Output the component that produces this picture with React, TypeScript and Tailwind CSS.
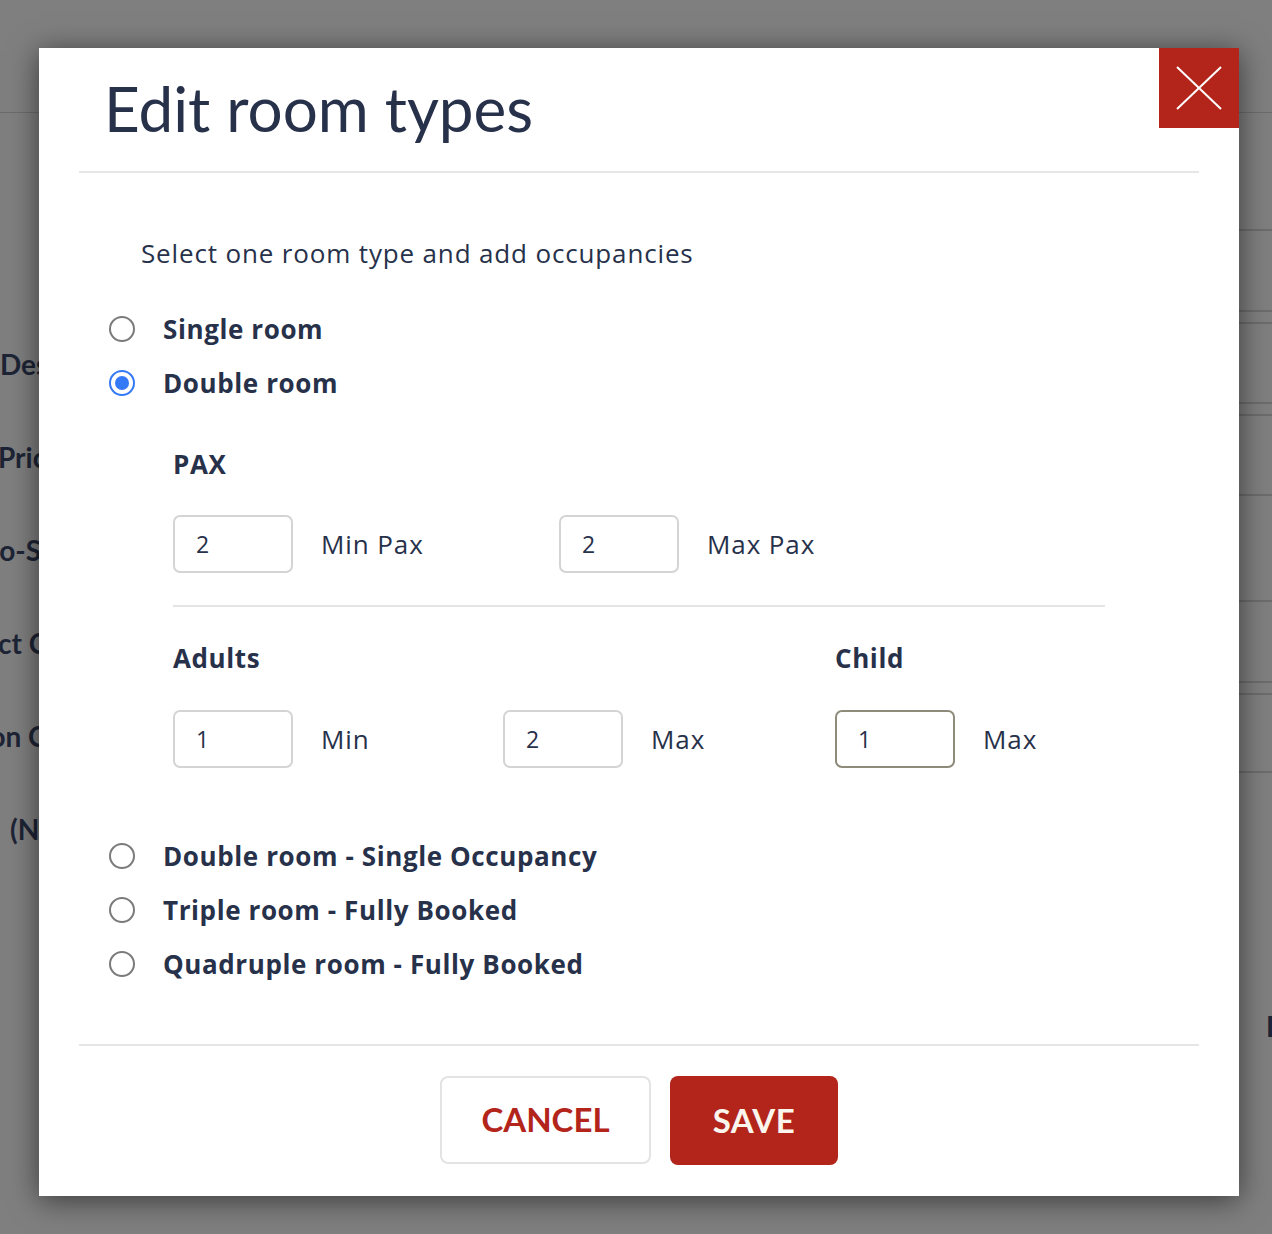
import React from 'react';

const ink = 'text-[#27314a]';
const body = "font-['Open_Sans','Noto_Sans',sans-serif]";

const Radio = ({ checked }: { checked?: boolean }) =>
  checked ? (
    <span className="flex h-[26px] w-[26px] shrink-0 items-center justify-center rounded-full border-[2.5px] border-[#3479f6] bg-white">
      <span className="h-[14px] w-[14px] rounded-full bg-[#3479f6]" />
    </span>
  ) : (
    <span className="h-[26px] w-[26px] shrink-0 rounded-full border-2 border-[#7b7b7b] bg-white" />
  );

const RoomOption = ({ label, checked }: { label: string; checked?: boolean }) => (
  <label className="flex h-[54px] items-center">
    <span className="ml-[70px] flex w-[54px] items-center">
      <Radio checked={checked} />
    </span>
    <span className={`text-[26px] font-bold tracking-[0.6px] ${ink}`}>{label}</span>
  </label>
);

const NumberField = ({ value, label, focused }: { value: string; label: string; focused?: boolean }) => (
  <div className="flex items-center">
    <div
      className={`flex h-[58px] w-[120px] items-center rounded-[7px] border-2 bg-white pl-[21px] text-[23px] ${ink} ${
        focused ? 'border-[#8e8b7b]' : 'border-[#d4d4d4]'
      }`}
    >
      {value}
    </div>
    <span className={`ml-[28px] text-[26px] tracking-[0.9px] ${ink}`}>{label}</span>
  </div>
);

// the page sitting under the overlay, only its edges peek out
const BackgroundPage = () => {
  const labels = [
    { text: 'Destination', offset: 'ml-0' },
    { text: 'Price', offset: '-ml-[2px]' },
    { text: 'Auto-Select', offset: '-ml-[46px]' },
    { text: 'Product Category', offset: '-ml-[77px]' },
    { text: 'Location Code', offset: '-ml-[86px]' },
    { text: '(N', offset: 'ml-[10px]' },
  ];
  const rightRows = [118, 81, 12, 80, 12, 80, 106, 81, 12, 78];

  return (
    <div className="flex h-[1234px] w-full justify-between overflow-hidden bg-[#7f7f7f]">
      <div className="flex w-[60px] flex-col overflow-hidden">
        <div className="h-[113px] border-b border-[#6c6c6c]" />
        <div className="flex flex-col pt-[204px]">
          {labels.map(({ text, offset }) => (
            <div key={text} className="flex h-[93px] items-center whitespace-nowrap">
              <span className={`${offset} text-[28px] font-bold text-[#1d2435]`}>{text}</span>
            </div>
          ))}
        </div>
      </div>
      <div className="flex w-[40px] flex-col">
        <div className="h-[113px] border-b border-[#6c6c6c]" />
        {rightRows.map((h, i) => (
          <div key={i} style={{ height: h }} className="border-b-2 border-[#6c6c6c]" />
        ))}
        <div className="mt-[232px] ml-[34px] text-[28px] font-bold text-[#1d2435]">D</div>
      </div>
    </div>
  );
};

export default function App() {
  return (
    <div className="relative h-[1234px] w-[1272px] overflow-hidden font-['Lato','Noto_Sans',sans-serif]">
      <BackgroundPage />

      <div className="absolute left-[39px] top-[48px] flex h-[1148px] w-[1200px] flex-col bg-white shadow-[0_4px_28px_rgba(0,0,0,0.55)]">
        <button className="absolute right-0 top-0 flex h-[80px] w-[80px] items-center justify-center bg-[#b3241b]">
          <svg width="46" height="44" viewBox="0 0 46 44" fill="none" stroke="white" strokeWidth="2">
            <line x1="1" y1="1" x2="45" y2="43" />
            <line x1="45" y1="1" x2="1" y2="43" />
          </svg>
        </button>

        <div className="mx-[40px] h-[125px] border-b-2 border-[#e6e6e6] pl-[25px] pt-[30px]">
          <h2 className={`text-[62px] leading-[61px] font-normal ${ink}`}>Edit room types</h2>
        </div>

        <div className={`flex flex-col ${body}`}>
          <p className={`ml-[102px] mt-[60px] flex h-[40px] items-center text-[26px] tracking-[0.85px] ${ink}`}>
            Select one room type and add occupancies
          </p>

          <div className="mt-[29px] flex flex-col">
            <RoomOption label="Single room" />
            <RoomOption label="Double room" checked />
          </div>

          <div className="ml-[134px] flex w-[932px] flex-col">
            <h3 className={`mt-[34px] flex h-[40px] items-center text-[26px] font-bold tracking-[0.6px] ${ink}`}>PAX</h3>
            <div className="mt-[31px] flex">
              <div className="w-[386px]">
                <NumberField value="2" label="Min Pax" />
              </div>
              <NumberField value="2" label="Max Pax" />
            </div>
            <div className="mt-[32px] border-b-2 border-[#e4e4e4]" />

            <div className="mt-[31px] flex">
              <div className="w-[662px]">
                <h3 className={`flex h-[40px] items-center text-[26px] font-bold tracking-[0.6px] ${ink}`}>Adults</h3>
                <div className="mt-[32px] flex">
                  <div className="w-[330px]">
                    <NumberField value="1" label="Min" />
                  </div>
                  <NumberField value="2" label="Max" />
                </div>
              </div>
              <div>
                <h3 className={`flex h-[40px] items-center text-[26px] font-bold tracking-[0.6px] ${ink}`}>Child</h3>
                <div className="mt-[32px]">
                  <NumberField value="1" label="Max" focused />
                </div>
              </div>
            </div>
          </div>

          <div className="mt-[61px] flex flex-col">
            <RoomOption label="Double room - Single Occupancy" />
            <RoomOption label="Triple room - Fully Booked" />
            <RoomOption label="Quadruple room - Fully Booked" />
          </div>
        </div>

        <div className="mx-[40px] mt-[53px] border-t-2 border-[#e6e6e6]" />

        <div className="mt-[30px] flex justify-center gap-[19px]">
          <button className="h-[88px] w-[211px] rounded-[8px] border-2 border-[#e3e3e3] bg-white text-[33px] font-bold text-[#b3241b]">
            CANCEL
          </button>
          <button className="h-[89px] w-[168px] rounded-[8px] bg-[#b3241b] text-[33px] font-bold tracking-[0.5px] text-[#faf6ee]">
            SAVE
          </button>
        </div>
      </div>
    </div>
  );
}
